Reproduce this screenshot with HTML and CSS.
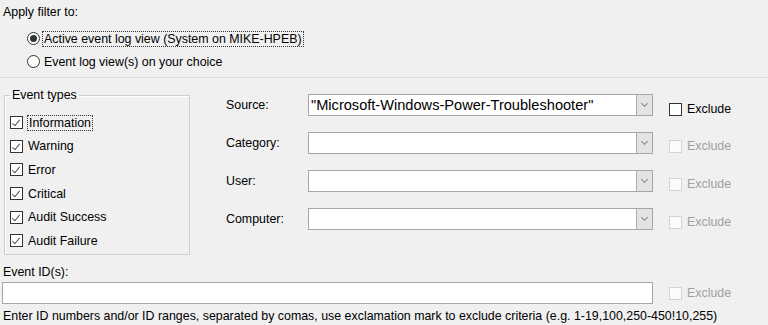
FILE: index.html
```html
<!DOCTYPE html>
<html lang="en">
<head>
  <meta charset="UTF-8">
  <title>Filter</title>
  <link rel="stylesheet" href="styles.css">
</head>
<body>
  <div class="apply">
    <div class="apply-title">Apply filter to:</div>
    <div class="radio-row first">
      <span class="radio checked"></span>
      <span class="lbl focus">Active event log view (System on MIKE-HPEB)</span>
    </div>
    <div class="radio-row">
      <span class="radio"></span>
      <span class="lbl">Event log view(s) on your choice</span>
    </div>
  </div>

  <div class="filters">
    <fieldset class="types">
      <legend>Event types</legend>
      <div class="check-row"><span class="check on"></span><span class="focus">Information</span></div>
      <div class="check-row"><span class="check on"></span><span>Warning</span></div>
      <div class="check-row"><span class="check on"></span><span>Error</span></div>
      <div class="check-row"><span class="check on"></span><span>Critical</span></div>
      <div class="check-row"><span class="check on"></span><span>Audit Success</span></div>
      <div class="check-row"><span class="check on"></span><span>Audit Failure</span></div>
    </fieldset>

    <div class="fields">
      <div class="label">Source:</div>
      <div class="combo"><span class="combo-text">"Microsoft-Windows-Power-Troubleshooter"</span><span class="combo-btn"></span></div>
      <div class="exclude first"><span class="check"></span>Exclude</div>

      <div class="label">Category:</div>
      <div class="combo"><span class="combo-text"></span><span class="combo-btn"></span></div>
      <div class="exclude disabled"><span class="check"></span>Exclude</div>

      <div class="label">User:</div>
      <div class="combo"><span class="combo-text"></span><span class="combo-btn"></span></div>
      <div class="exclude disabled"><span class="check"></span>Exclude</div>

      <div class="label">Computer:</div>
      <div class="combo"><span class="combo-text"></span><span class="combo-btn"></span></div>
      <div class="exclude disabled"><span class="check"></span>Exclude</div>
    </div>
  </div>

  <div class="event-ids">
    <div class="ids-title">Event ID(s):</div>
    <div class="ids-row">
      <div class="text-box"></div>
      <div class="exclude disabled"><span class="check"></span>Exclude</div>
    </div>
    <div class="hint">Enter ID numbers and/or ID ranges, separated by comas, use exclamation mark to exclude criteria (e.g. 1-19,100,250-450!10,255)</div>
  </div>
</body>
</html>
```

FILE: styles.css
```css
body {
  margin: 0;
  width: 768px;
  height: 325px;
  overflow: hidden;
  background-color: #f0f0f0;
  font-family: "Liberation Sans", Arial, sans-serif;
  font-size: 12.4px;
  color: #000;
}
.apply {
  padding-top: 4px;
  height: 73px;
  border-bottom: 1px solid #dadada;
}
.apply-title {
  padding-left: 3px;
  height: 16px;
  line-height: 16px;
}
.radio-row {
  display: flex;
  align-items: center;
  gap: 3px;
  height: 23px;
  padding-left: 27px;
}
.radio-row.first {
  margin-top: 7px;
}
.radio-row .lbl {
  padding: 0 1px;
}
.radio {
  width: 11px;
  height: 11px;
  border: 1px solid #333;
  border-radius: 50%;
  background: #fff;
  position: relative;
}
.radio.checked::after {
  content: "";
  position: absolute;
  left: 2px;
  top: 2px;
  width: 7px;
  height: 7px;
  border-radius: 50%;
  background: #333;
}
.focus {
  outline: 1px dotted #333;
  outline-offset: 0;
  padding: 0 1px;
}

.filters {
  display: flex;
  align-items: flex-start;
  margin-top: 10px;
  padding-left: 4px;
}
.types {
  box-sizing: border-box;
  width: 186px;
  height: 167px;
  margin: 0;
  padding: 9px 5px 0;
  border: 1px solid #cfcfcf;
  box-shadow: inset 1px 1px 0 #fff;
}
.types legend {
  padding: 0 2px;
  line-height: 14px;
}
.check-row {
  display: flex;
  align-items: center;
  gap: 5px;
  height: 23.6px;
}
.check {
  box-sizing: border-box;
  width: 13px;
  height: 13px;
  border: 1px solid #333;
  background: #fff;
  position: relative;
  flex-shrink: 0;
}
.check.on::after {
  content: "";
  position: absolute;
  left: 3px;
  top: 1px;
  width: 3px;
  height: 7px;
  border: solid #555;
  border-width: 0 1px 1px 0;
  transform: rotate(40deg);
}

.fields {
  display: grid;
  grid-template-columns: 82px 345px auto;
  grid-auto-rows: 22px;
  row-gap: 16px;
  align-items: center;
  margin-left: 36px;
  margin-top: 6px;
}
.combo {
  box-sizing: border-box;
  display: flex;
  height: 22px;
  border: 1px solid #a6a6a6;
  background: #fff;
}
.combo-text {
  flex: 1;
  padding-left: 2px;
  font-size: 14.6px;
  line-height: 20px;
  white-space: nowrap;
  overflow: hidden;
}
.combo-btn {
  width: 15px;
  border-left: 1px solid #adadad;
  background: #e3e3e3;
  position: relative;
}
.combo-btn::after {
  content: "";
  position: absolute;
  left: 5px;
  top: 6px;
  width: 4px;
  height: 4px;
  border: solid #888;
  border-width: 0 1px 1px 0;
  transform: rotate(45deg);
}
.exclude {
  display: flex;
  align-items: center;
  gap: 5px;
  margin-left: 16px;
}
.fields .exclude {
  margin-top: 6px;
}
.fields .exclude.first {
  margin-top: 8px;
}
.exclude.disabled {
  color: #a0a0a0;
}
.exclude.disabled .check {
  border-color: #d4d4d4;
  background: #fbfbfb;
}

.event-ids {
  margin-top: 9px;
}
.ids-title {
  padding-left: 3px;
  height: 16px;
  line-height: 16px;
}
.ids-row {
  display: flex;
  align-items: center;
  margin-top: 2px;
  padding-left: 2px;
}
.text-box {
  box-sizing: border-box;
  width: 651px;
  height: 22px;
  border: 1px solid #a6a6a6;
  background: #fff;
}
.hint {
  padding-left: 3px;
  margin-top: 4px;
  line-height: 16px;
}
```
